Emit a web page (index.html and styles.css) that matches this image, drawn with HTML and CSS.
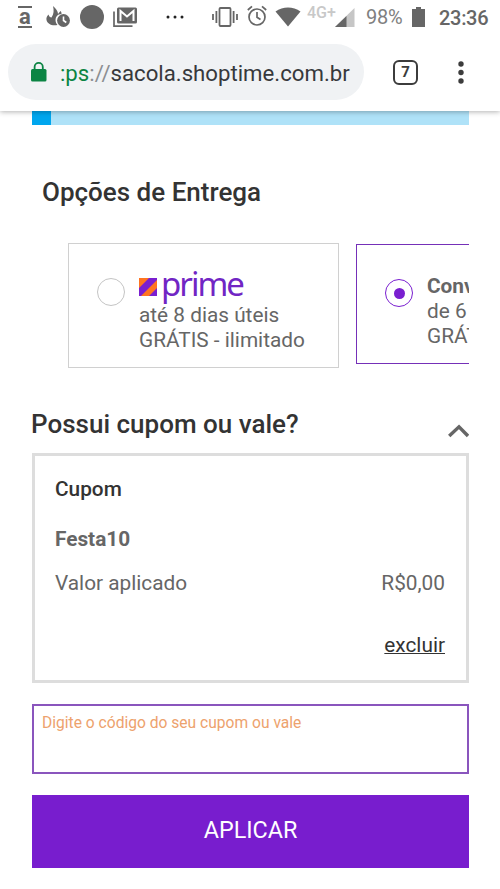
FILE: index.html
```html
<!DOCTYPE html>
<html lang="pt-BR">
<head>
<meta charset="utf-8">
<meta name="viewport" content="width=device-width, initial-scale=1">
<title>Sacola - Shoptime</title>
<link rel="stylesheet" href="styles.css">
</head>
<body>
<header class="browser">
  <div class="status">
    <span class="app-a">a</span>
    <svg class="ic-flame" width="26" height="24" viewBox="0 0 26 24"><path fill="#666" d="M7 1c3 3 5 5 5 8l2.500-3c1 1 1 2 1 3-4 0-6 3-6 6 0 2 1 4 2 5-6 1-10-1-11-5C0 13 1 11 2.500 9.500c.5 2 1.500 3 3 3C8 9 8 5 7 1z"/><circle cx="17.500" cy="15.500" r="6.400" fill="#666"/><path fill="none" stroke="#fff" stroke-width="1.600" d="M17.500 11.500v4l2.800 2"/></svg>
    <span class="dot"></span>
    <svg class="ic-mail" width="25" height="21" viewBox="0 0 25 21"><path fill="none" stroke="#666" stroke-width="1.7" d="M1 4.5v14.6h18.5"/><rect x="4" y="0.5" width="20" height="16" rx="1.5" fill="#666"/><path fill="none" stroke="#fff" stroke-width="2" d="M7.5 14V4l6.5 5.5L20.500 4v10"/></svg>
    <svg class="ic-more" width="18" height="4" viewBox="0 0 18 4"><circle cx="2" cy="2" r="1.5" fill="#222"/><circle cx="9" cy="2" r="1.5" fill="#222"/><circle cx="16" cy="2" r="1.5" fill="#222"/></svg>
    <svg class="ic-vibrate" width="26" height="20" viewBox="0 0 26 20"><g fill="none" stroke="#666" stroke-width="1.8"><rect x="7.5" y="1" width="11" height="18" rx="1"/><path d="M4.400 4v12M1 7v6M21.600 4v12M25 7v6"/></g></svg>
    <svg class="ic-alarm" width="20" height="22" viewBox="0 0 20 22"><g fill="none" stroke="#666" stroke-width="1.7"><circle cx="10" cy="12" r="8"/><path d="M10 7v5.300l3.500 2.200M.8 5 5 1.300M19.200 5 15 1.300"/></g></svg>
    <svg class="ic-wifi" width="26" height="20" viewBox="0 0 26 20"><path fill="#666" d="M.5 4.500C8-.8 18-.8 25.500 4.500L13 19.500z"/></svg>
    <span class="net">4G+</span>
    <svg class="ic-signal" width="20" height="20" viewBox="0 0 20 20"><path fill="#c6c6c6" d="M19.500 0v19H0z"/><path fill="#666" d="M11.500 8v11H0z"/></svg>
    <span class="pct">98%</span>
    <svg class="ic-batt" width="13" height="20" viewBox="0 0 13 20"><path fill="#666" d="M0 2h4V0h5v2h4v18H0z"/></svg>
    <span class="clock">23:36</span>
  </div>
  <div class="toolbar">
    <div class="url">
      <svg class="ic-lock" width="16" height="20" viewBox="0 0 16 20"><rect x="0" y="7" width="15.500" height="12.500" rx="1.500" fill="#0b8443"/><path fill="none" stroke="#0b8443" stroke-width="1.800" d="M3.600 8V5a4.100 4.100 0 0 1 8.200 0v3"/></svg>
      <span class="addr"><span class="scheme">:ps</span><span class="sep">://</span>sacola.shoptime.com.br</span>
    </div>
    <span class="tabs">7</span>
    <svg class="ic-menu" width="6" height="24" viewBox="0 0 6 24"><g fill="#3c3c3c"><circle cx="3" cy="3" r="2.700"/><circle cx="3" cy="11.500" r="2.700"/><circle cx="3" cy="20" r="2.700"/></g></svg>
  </div>
</header>
<main class="page">
  <div class="progress"><div class="bar"></div></div>
  <h2 class="title delivery-title">Opções de Entrega</h2>
  <div class="options">
    <label class="option">
      <span class="radio"></span>
      <span class="option-text">
        <span class="logo"><svg width="18" height="18" viewBox="0 0 18 18"><rect width="18" height="18" fill="#7a1fd0"/><path fill="#ff7420" d="M0 0h10L0 10zM18 2v8l-8 8H2z"/></svg><span class="prime">prime</span></span>
        <span>até 8 dias úteis</span>
        <span>GRÁTIS - ilimitado</span>
      </span>
    </label>
    <label class="option selected">
      <span class="radio"></span>
      <span class="option-text"><b>Conv</b><span>de 6</span><span>GRÁT</span></span>
    </label>
  </div>
  <div class="coupon-head">
    <h2 class="title">Possui cupom ou vale?</h2>
    <svg class="chevron" width="22" height="14" viewBox="0 0 22 14"><path fill="none" stroke="#666" stroke-width="3.400" d="M2.200 12 12 2.800 21 12"/></svg>
  </div>
  <section class="coupon">
    <h3>Cupom</h3>
    <strong class="code">Festa10</strong>
    <div class="row"><span>Valor aplicado</span><span class="value">R$0,00</span></div>
    <a class="remove">excluir</a>
  </section>
  <div class="field">Digite o código do seu cupom ou vale</div>
  <button class="apply">APLICAR</button>
</main>
</body>
</html>
```
FILE: styles.css
```css
* { box-sizing: border-box; }
body { margin: 0; width: 500px; height: 889px; overflow: hidden; background: #fff; color: #666; font-family: Roboto, "Liberation Sans", sans-serif; }
svg { display: block; flex: none; }
h2, h3 { margin: 0; font-weight: 500; color: #333; }

.browser { position: relative; height: 111px; background: #fff; box-shadow: 0 1px 5px rgba(0,0,0,.3); }
.status { display: flex; align-items: center; height: 34px; white-space: nowrap; }
.app-a { margin-left: 18px; margin-top: -1px; width: 14px; height: 22px; border-top: 2px solid #666; border-bottom: 2px solid #666; font-size: 22px; font-weight: 700; line-height: 17px; text-align: center; }
.ic-flame { margin-left: 14px; }
.dot { margin-left: 8px; width: 24px; height: 24px; border-radius: 50%; background: #666; }
.ic-mail { margin-left: 9px; }
.ic-more { margin-left: 28px; margin-top: -1px; }
.ic-vibrate { margin-left: 28px; margin-top: -1px; }
.ic-alarm { margin-left: 9px; margin-top: -2px; }
.ic-wifi { margin-left: 8px; }
.net { margin-left: 6px; width: 29px; height: 31px; font-size: 16px; line-height: 22px; font-weight: 500; color: #c8c8c8; }
.ic-signal { margin-left: -1px; margin-top: 1px; }
.pct { margin-left: 11px; width: 38px; font-size: 20px; letter-spacing: -.3px; color: #808080; }
.ic-batt { margin-left: 8px; margin-top: -1px; }
.clock { margin-left: 14px; margin-top: 1px; font-size: 20px; font-weight: 500; letter-spacing: -.3px; }

.toolbar { display: flex; align-items: center; padding: 10px 0 0 8px; }
.url { display: flex; align-items: center; width: 356px; height: 56px; border-radius: 28px; background: #f0f2f4; padding-left: 23px; }
.ic-lock { margin-top: -1px; }
.addr { margin-left: 13px; margin-top: 1px; font-size: 22.200px; line-height: 28px; color: #37393c; white-space: nowrap; }
.scheme { color: #0b8443; }
.sep { color: #8b8e91; }
.tabs { margin-left: 29px; width: 25px; height: 25px; border: 2.500px solid #3c3c3c; border-radius: 6px; font-size: 15px; font-weight: 700; line-height: 21px; text-align: center; color: #3c3c3c; }
.ic-menu { margin-left: 40px; margin-top: 2px; }

.page { padding: 0 31px 0 32px; }
.progress { height: 14px; background: #afe2f8; }
.bar { width: 19px; height: 14px; background: #00a6ee; }
.title { font-size: 26px; line-height: 32px; white-space: nowrap; }
.delivery-title { margin: 51px 0 0 10px; }
.options { display: flex; align-items: flex-start; gap: 17px; height: 125px; margin-top: 35px; padding-left: 36px; overflow: hidden; }
.option { flex: none; display: flex; width: 271px; height: 125px; border: 1px solid #d0d0d0; padding: 29px 0 0 28px; }
.option.selected { height: 120px; margin-top: 1px; border-color: #7530b8; }
.radio { flex: none; display: flex; align-items: center; justify-content: center; width: 28px; height: 28px; margin: 5px 14px 0 0; border: 1px solid #c4c4c4; border-radius: 50%; }
.selected .radio { border-color: #7a1fd0; }
.selected .radio::after { content: ""; width: 11px; height: 11px; border-radius: 50%; background: #7a1fd0; }
.option-text { display: flex; flex-direction: column; font-size: 20.800px; line-height: 25px; white-space: nowrap; }
.logo { display: flex; align-items: flex-start; height: 29px; gap: 4px; margin-bottom: 1px; }
.logo svg { margin-top: 5px; }
.prime { margin-top: -4px; font-family: "Noto Sans", sans-serif; font-size: 33px; line-height: 29px; letter-spacing: -2px; color: #7125c4; }

.coupon-head { display: flex; justify-content: space-between; margin: 40px 0 0 -1px; height: 45px; }
.chevron { margin-top: 16px; }
.coupon { height: 230px; border: 3px solid #ddd; padding: 19px 21px 0 20px; font-size: 20.800px; line-height: 28px; display: flex; flex-direction: column; }
.coupon h3 { font-size: 20.800px; line-height: 28px; }
.code { margin-top: 22px; font-weight: 700; }
.row { display: flex; justify-content: space-between; margin-top: 16px; }
.remove { align-self: flex-end; margin-top: 34px; color: #333; text-decoration: underline; text-decoration-thickness: 1px; }
.field { height: 70px; margin-top: 21px; border: 2px solid #8a55bd; padding: 7px 8px; font-size: 15.600px; line-height: 20px; color: #eda26d; }
.apply { display: block; width: 100%; height: 73px; margin-top: 21px; padding: 0 0 4px; border: 0; background: #781dce; color: #fff; font-family: inherit; font-size: 23.300px; }
```
